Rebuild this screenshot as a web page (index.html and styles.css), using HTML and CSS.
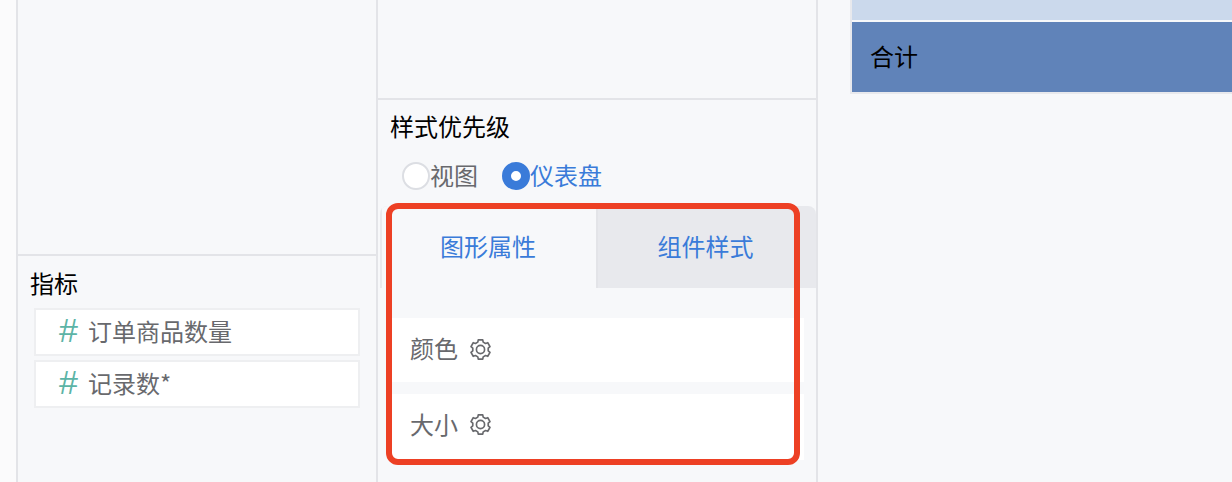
FILE: index.html
```html
<!DOCTYPE html>
<html lang="zh-CN">
<head>
<meta charset="utf-8">
<title>样式优先级</title>
<link rel="stylesheet" href="styles.css">
</head>
<body>
<svg class="defs" width="0" height="0" aria-hidden="true">
  <symbol id="gear" viewBox="0 0 22 22">
    <polygon points="8.43,3.95 8.86,1.75 13.14,1.75 13.57,3.95 15.82,5.25 17.95,4.52 20.08,8.22 18.39,9.7 18.39,12.3 20.08,13.78 17.95,17.48 15.82,16.75 13.57,18.05 13.14,20.25 8.86,20.25 8.43,18.05 6.18,16.75 4.05,17.48 1.92,13.78 3.61,12.3 3.61,9.7 1.92,8.22 4.05,4.52 6.18,5.25" fill="none" stroke="currentColor" stroke-width="1.6" stroke-linejoin="round"/>
    <circle cx="11" cy="11" r="3.9" fill="none" stroke="currentColor" stroke-width="1.6"/>
  </symbol>
</svg>
<div class="app">
  <div class="strip"></div>
  <section class="col col-fields">
    <div class="fields-top"></div>
    <div class="measures">
      <div class="heading">指标</div>
      <div class="field"><span class="hash">#</span><span>订单商品数量</span></div>
      <div class="field"><span class="hash">#</span><span>记录数*</span></div>
    </div>
  </section>
  <section class="col col-style">
    <div class="style-top"></div>
    <div class="style-body">
      <div class="heading">样式优先级</div>
      <div class="radios">
        <label class="radio"><span class="dot"></span><span class="radio-text">视图</span></label>
        <label class="radio on"><span class="dot"></span><span class="radio-text">仪表盘</span></label>
      </div>
    </div>
    <div class="panel">
      <div class="tabs">
        <div class="tab tab-active">图形属性</div>
        <div class="tab tab-idle">组件样式</div>
      </div>
      <div class="props">
        <div class="prop prop-a">颜色<svg class="gear"><use href="#gear"/></svg></div>
        <div class="prop prop-b">大小<svg class="gear"><use href="#gear"/></svg></div>
      </div>
      <div class="highlight"></div>
    </div>
  </section>
  <section class="col-preview">
    <div class="table">
      <div class="row-light"></div>
      <div class="row-total">合计</div>
    </div>
  </section>
</div>
</body>
</html>
```
FILE: styles.css
```css
* { box-sizing: border-box; }
html, body { margin: 0; height: 100%; }
body {
  background: #fbfbfc;
  font-family: "Noto Sans CJK SC", "Noto Sans", sans-serif;
  font-size: 24px;
  color: #000;
  overflow: hidden;
}
.defs { position: absolute; }
.app { display: flex; height: 482px; }
.strip { width: 16px; flex: none; }
.col {
  flex: none;
  background: #f7f8fa;
  border-left: 2px solid #e3e4e8;
}
.col-fields { width: 360px; }
.col-style { width: 440px; position: relative; }
.fields-top { height: 256px; border-bottom: 2px solid #e3e4e8; }
.measures { padding: 12px 0 0 12px; }
.heading { height: 32px; line-height: 30px; }
.field {
  display: flex;
  align-items: center;
  width: 326px;
  height: 48px;
  margin: 4px 0 0 4px;
  padding: 0 0 2px 23px;
  background: #fff;
  border: 2px solid #eeeff1;
  color: #68696d;
  line-height: 32px;
}
.heading + .field { margin-top: 8px; }
.hash {
  width: 29px;
  margin-top: -2px;
  font-family: "Liberation Sans", sans-serif;
  font-size: 34px;
  color: #5cb4a6;
}
.style-top { height: 100px; border-bottom: 2px solid #e3e4e8; }
.style-body { padding: 11px 0 0 12px; }
.radios { display: flex; gap: 24px; margin: 19px 0 16px 12px; height: 28px; }
.radio { display: flex; align-items: center; color: #68696d; line-height: 28px; }
.radio.on { color: #3a7bd9; }
.radio-text { margin-top: -2px; }
.dot {
  width: 28px;
  height: 28px;
  flex: none;
  border-radius: 50%;
  background: #fff;
  border: 2px solid #dcdee3;
}
.on .dot { background: #fff; border: 9px solid #3a7bd9; }
.panel { position: relative; margin-left: 2px; }
.tabs {
  display: flex;
  height: 82px;
  background: #e8e9ed;
  border-radius: 8px 8px 0 0;
  overflow: hidden;
}
.tab {
  width: 218px;
  line-height: 80px;
  text-align: center;
  color: #3a7bd9;
}
.tab-active {
  padding-right: 2px;
  background: #f7f8fa;
  border-left: 2px solid #e8e9ed;
  border-right: 2px solid #e3e4e8;
}
.tab-idle { padding-right: 3px; }
.props { margin: 30px 12px 0 8px; display: flex; flex-direction: column; gap: 12px; }
.prop {
  display: flex;
  align-items: center;
  gap: 11px;
  padding-left: 22px;
  background: #fff;
  color: #68696d;
}
.prop-a { height: 64px; padding-bottom: 5px; }
.prop-b { height: 66px; padding-bottom: 8px; }
.gear { width: 23px; height: 23px; margin-top: 3px; color: #68696d; }
.highlight {
  position: absolute;
  left: 6px;
  top: -3px;
  width: 414px;
  height: 262px;
  border: 6px solid #ed4024;
  border-radius: 12px;
}
.col-preview {
  flex: 1;
  min-width: 0;
  background: #f7f8fa;
  border-left: 2px solid #e3e4e8;
  padding-left: 32px;
}
.table { border-left: 2px solid #e8e9ed; border-bottom: 2px solid #e8e9ed; }
.row-light { height: 20px; background: #cbd9ec; }
.row-total {
  height: 70px;
  margin-top: 2px;
  padding-left: 18px;
  line-height: 68px;
  background: #6083b9;
}
```
